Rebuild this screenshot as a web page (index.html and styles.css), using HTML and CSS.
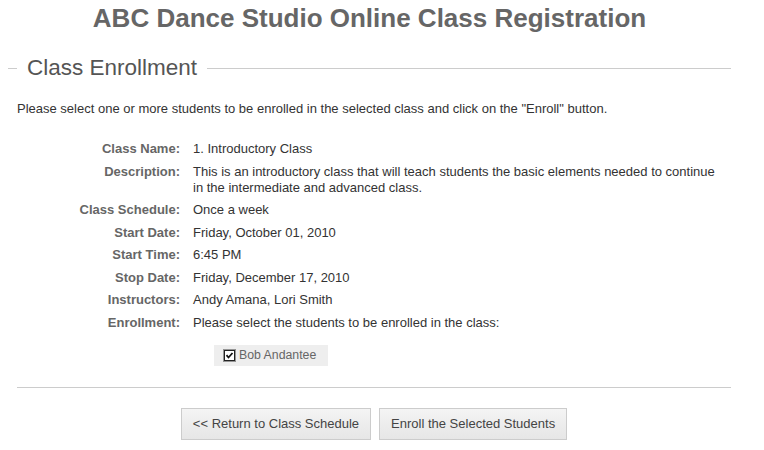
FILE: index.html
```html
<!DOCTYPE html>
<html>
<head>
<meta charset="utf-8">
<link rel="stylesheet" href="styles.css">
</head>
<body>
<div class="page">
  <h1 class="title">ABC Dance Studio Online Class Registration</h1>
  <fieldset class="enroll">
    <legend class="legend">Class Enrollment</legend>
    <p class="intro">Please select one or more students to be enrolled in the selected class and click on the "Enroll" button.</p>
    <div class="details">
      <div class="label">Class Name:</div><div class="value">1. Introductory Class</div>
      <div class="label">Description:</div><div class="value">This is an introductory class that will teach students the basic elements needed to continue in the intermediate and advanced class.</div>
      <div class="label">Class Schedule:</div><div class="value">Once a week</div>
      <div class="label">Start Date:</div><div class="value">Friday, October 01, 2010</div>
      <div class="label">Start Time:</div><div class="value">6:45 PM</div>
      <div class="label">Stop Date:</div><div class="value">Friday, December 17, 2010</div>
      <div class="label">Instructors:</div><div class="value">Andy Amana, Lori Smith</div>
      <div class="label">Enrollment:</div><div class="value">Please select the students to be enrolled in the class:</div>
    </div>
    <div class="students">
      <label class="student"><span class="cb"><svg width="13" height="13" viewBox="0 0 13 13"><rect x="0.5" y="0.5" width="12" height="12" fill="#fff" stroke="#333" stroke-dasharray="1 1"/><rect x="1.5" y="1.5" width="10" height="10" fill="#fff" stroke="#222"/><path d="M3.5 6.2 L5.5 8.5 L9.5 4" fill="none" stroke="#111" stroke-width="1.8"/></svg></span>Bob Andantee</label>
    </div>
    <div class="rule"></div>
    <div class="actions">
      <button class="btn">&lt;&lt; Return to Class Schedule</button>
      <button class="btn">Enroll the Selected Students</button>
    </div>
  </fieldset>
</div>
</body>
</html>
```

FILE: styles.css
```css
html, body { margin: 0; padding: 0; background: #fff; }
body { font-family: "Liberation Sans", Arial, sans-serif; font-size: 13px; color: #333; }
.page { width: 723px; margin-left: 8px; }
.title {
  margin: 0; padding-top: 4px; height: 38px;
  text-align: center; font-size: 26px; font-weight: bold; color: #666;
  line-height: 28px;
}
.enroll {
  margin: 14px 0 0 0; padding: 0 0 0 9px;
  border: none; border-top: 1px solid #ccc;
}
.legend {
  padding: 0 10px; font-size: 22.5px; color: #555; line-height: 24px;
}
.intro { margin: 21px 0 0 0; line-height: 16px; }
.details {
  display: grid; grid-template-columns: 163px 528px;
  column-gap: 13px; row-gap: 6.5px; margin-top: 24px;
  line-height: 16px;
}
.label { text-align: right; font-weight: bold; color: #666; }
.value { color: #333; }
.students { padding-left: 197px; margin-top: 14px; }
.student {
  display: inline-flex; align-items: center; gap: 3px;
  background: #eee; width: 105px; height: 21px; padding-left: 9px;
  color: #666; font-size: 12.3px;
}
.cb { display: inline-flex; }
.rule { border-top: 1px solid #ccc; margin-top: 21px; }
.actions { display: flex; justify-content: center; gap: 8px; margin-top: 20px; }
.btn {
  font-family: "Liberation Sans", Arial, sans-serif; font-size: 13px; color: #444;
  height: 32px; padding: 0 11px;
  border: 1px solid #ccc;
  background: linear-gradient(#f4f4f4, #e6e6e6);
}
```
